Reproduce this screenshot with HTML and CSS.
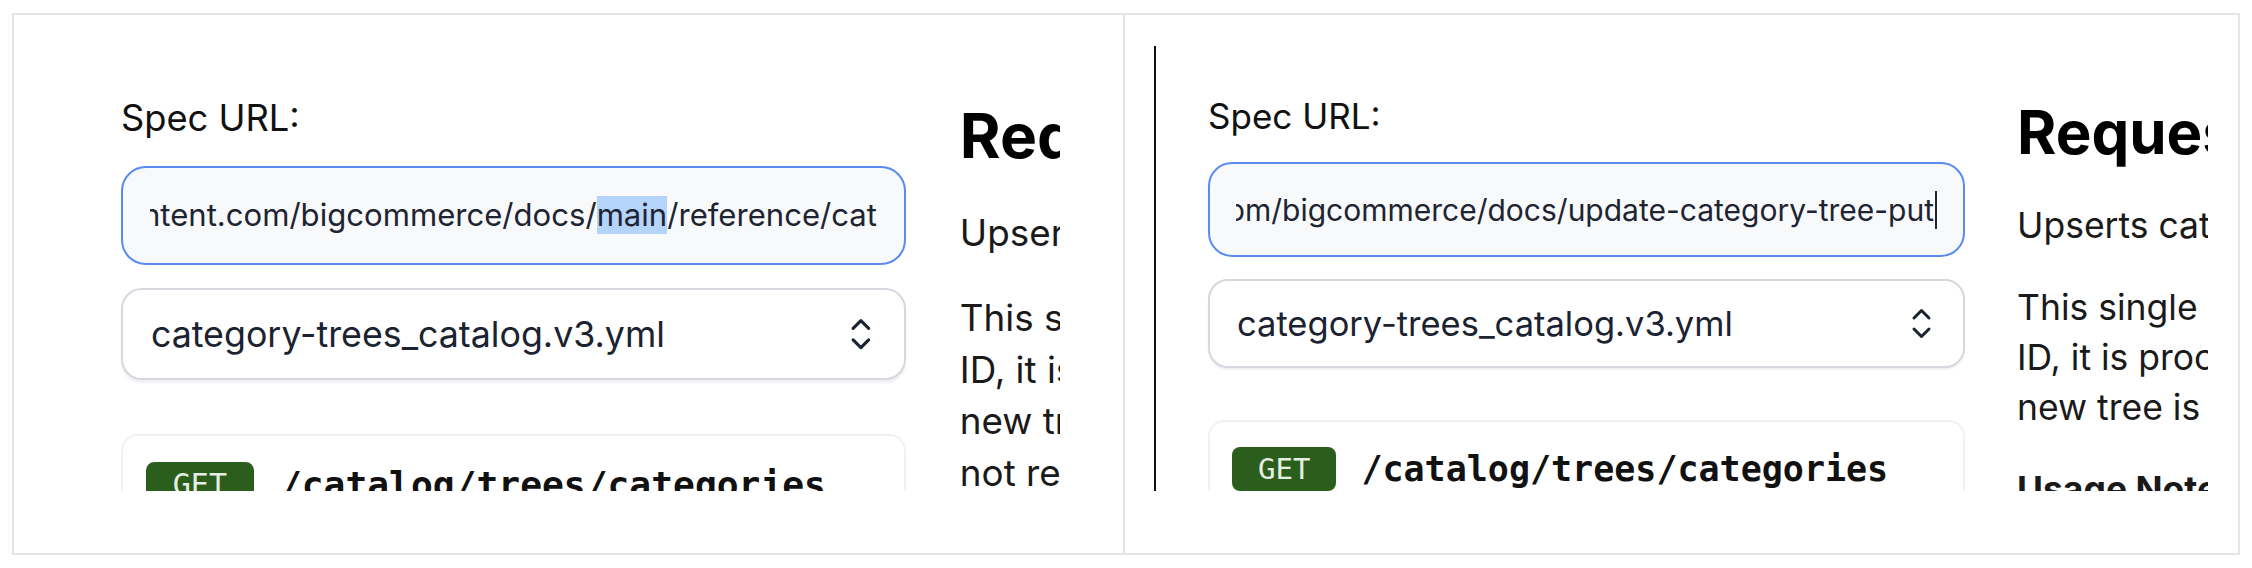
FILE: index.html
```html
<!DOCTYPE html>
<html lang="en">
<head>
<meta charset="utf-8">
<title>Spec preview comparison</title>
<link rel="stylesheet" href="styles.css">
</head>
<body>
<div class="frame">
  <section class="pane pane--left">
    <div class="viewport">
      <div class="page">
        <div class="form-col">
          <label class="label">Spec URL:</label>
          <div class="field field--focus">
            <div class="scroll-window">
              <span class="url-visible">https://raw.githubusercontent.com/bigcommerce/docs/<mark class="sel">main</mark>/reference/cat</span><span class="url-rest">alog/category-trees_catalog.v3.yml</span>
            </div>
          </div>
          <div class="select">
            <span class="select-value">category-trees_catalog.v3.yml</span>
            <svg class="chev" viewBox="0 0 21 33" width="21" height="33" aria-hidden="true"><path d="M3 11 L10.5 3.5 L18 11 M3 22 L10.5 29.5 L18 22" fill="none" stroke="#1b2230" stroke-width="3" stroke-linecap="round" stroke-linejoin="round"/></svg>
          </div>
          <div class="endpoint">
            <span class="method">GET</span>
            <code class="path">/catalog/trees/categories</code>
          </div>
        </div>
        <div class="doc-col">
          <h1 class="doc-title">Request</h1>
          <p class="doc-text">Upserts category trees.</p>
          <p class="doc-text">This single endpoint updates and creates category trees. If a tree object contains an<br>ID, it is processed as an update operation using that ID. If you do not provide an ID, a<br>new tree is created. The category tree channel_id field is required to create a category tree, but is<br>not required on the update.</p>
          <p class="doc-text"><strong>Usage Notes</strong></p>
        </div>
      </div>
    </div>
  </section>
  <section class="pane pane--right">
    <div class="viewport">
      <div class="page">
        <div class="form-col">
          <label class="label">Spec URL:</label>
          <div class="field field--focus">
            <div class="scroll-window">
              <span class="url-visible">https://developer.bigcommerce.com/bigcommerce/docs/update-category-tree-put</span><span class="caret"></span>
            </div>
          </div>
          <div class="select">
            <span class="select-value">category-trees_catalog.v3.yml</span>
            <svg class="chev" viewBox="0 0 21 33" width="21" height="33" aria-hidden="true"><path d="M3 11 L10.5 3.5 L18 11 M3 22 L10.5 29.5 L18 22" fill="none" stroke="#1b2230" stroke-width="3" stroke-linecap="round" stroke-linejoin="round"/></svg>
          </div>
          <div class="endpoint">
            <span class="method">GET</span>
            <code class="path">/catalog/trees/categories</code>
          </div>
        </div>
        <div class="doc-col">
          <h1 class="doc-title">Request</h1>
          <p class="doc-text">Upserts category trees.</p>
          <p class="doc-text">This single endpoint updates and creates category trees. If a tree object contains an<br>ID, it is processed as an update operation using that ID. If you do not provide an ID, a<br>new tree is created. The category tree channel_id field is required to create a category tree, but is not required on the update.</p>
          <p class="doc-text"><strong>Usage Notes</strong></p>
        </div>
      </div>
    </div>
  </section>
</div>
</body>
</html>
```

FILE: styles.css
```css
* { box-sizing: border-box; }

body {
  margin: 0;
  background: #ffffff;
  font-family: Inter, "Noto Sans", "Liberation Sans", sans-serif;
  color: #111111;
}

.frame {
  margin: 13px 12px;
  width: 2228px;
  height: 542px;
  border: 2px solid #e4e4e9;
  display: grid;
  grid-template-columns: 1109px 1fr;
}

.pane {
  padding-top: 31px;
  overflow: hidden;
}

.pane--left { padding-left: 53px; }

.pane--right {
  border-left: 2px solid #e4e4e9;
  padding-left: 29px;
}

.viewport {
  height: 445px;
  overflow: hidden;
}

.pane--left .viewport { width: 993px; }

.pane--right .viewport {
  width: 1054px;
  border-left: 2px solid #111111;
}

.pane--left .page { zoom: 1.037; }

.page {
  display: flex;
  gap: 52px;
  padding-left: 52px;
  width: max-content;
}

.form-col {
  width: 757px;
  flex: none;
  padding-top: 49px;
  display: flex;
  flex-direction: column;
}

.label {
  display: block;
  font-size: 35px;
  line-height: 42px;
  margin-bottom: 25px;
  color: #111111;
}

.field {
  height: 95px;
  border-radius: 24px;
  padding: 0 26px;
  display: flex;
  align-items: center;
}

.field--focus {
  border: 2px solid #5a8cf0;
  background: #f8f9fb;
}

.scroll-window {
  flex: 1;
  min-width: 0;
  overflow: hidden;
  display: flex;
  justify-content: flex-end;
  align-items: center;
  white-space: nowrap;
  font-size: 30px;
  line-height: 40px;
  color: #1e2431;
}

.url-visible { flex: none; }

.url-rest {
  flex: none;
  width: 0;
  overflow: hidden;
}

.sel {
  background: #b4d4fb;
  color: inherit;
}

.caret {
  flex: none;
  width: 2px;
  height: 38px;
  background: #1e2431;
  margin-left: 1px;
}

.select {
  margin-top: 22px;
  height: 89px;
  border: 2px solid #d5d8de;
  border-radius: 20px;
  background: #ffffff;
  box-shadow: 0 2px 2px rgba(0, 0, 0, 0.06);
  padding: 0 31px 0 27px;
  display: flex;
  align-items: center;
  justify-content: space-between;
}

.select-value {
  font-size: 34.5px;
  color: #1b2230;
}

.chev { flex: none; display: block; }

.endpoint {
  margin-top: 52px;
  border: 2px solid #eef1f6;
  border-radius: 16px;
  padding: 25px 22px;
  display: flex;
  align-items: center;
  gap: 25px;
}

.method {
  background: #2b5e1c;
  color: #e6efe3;
  font-family: "DejaVu Sans Mono", "Liberation Mono", monospace;
  font-size: 29px;
  line-height: 40px;
  padding: 2px 26px;
  border-radius: 8px;
}

.path {
  font-family: "DejaVu Sans Mono", "Liberation Mono", monospace;
  font-weight: 700;
  font-size: 35px;
  color: #111111;
}

.doc-col {
  width: 1600px;
  flex: none;
  padding-top: 53px;
}

.doc-title {
  margin: 0 0 35px;
  font-size: 60px;
  line-height: 67px;
  font-weight: 700;
  color: #000000;
}

.doc-text {
  margin: 0 0 32px;
  font-size: 35.5px;
  line-height: 50px;
  white-space: nowrap;
  color: #1a1a1a;
}
```
